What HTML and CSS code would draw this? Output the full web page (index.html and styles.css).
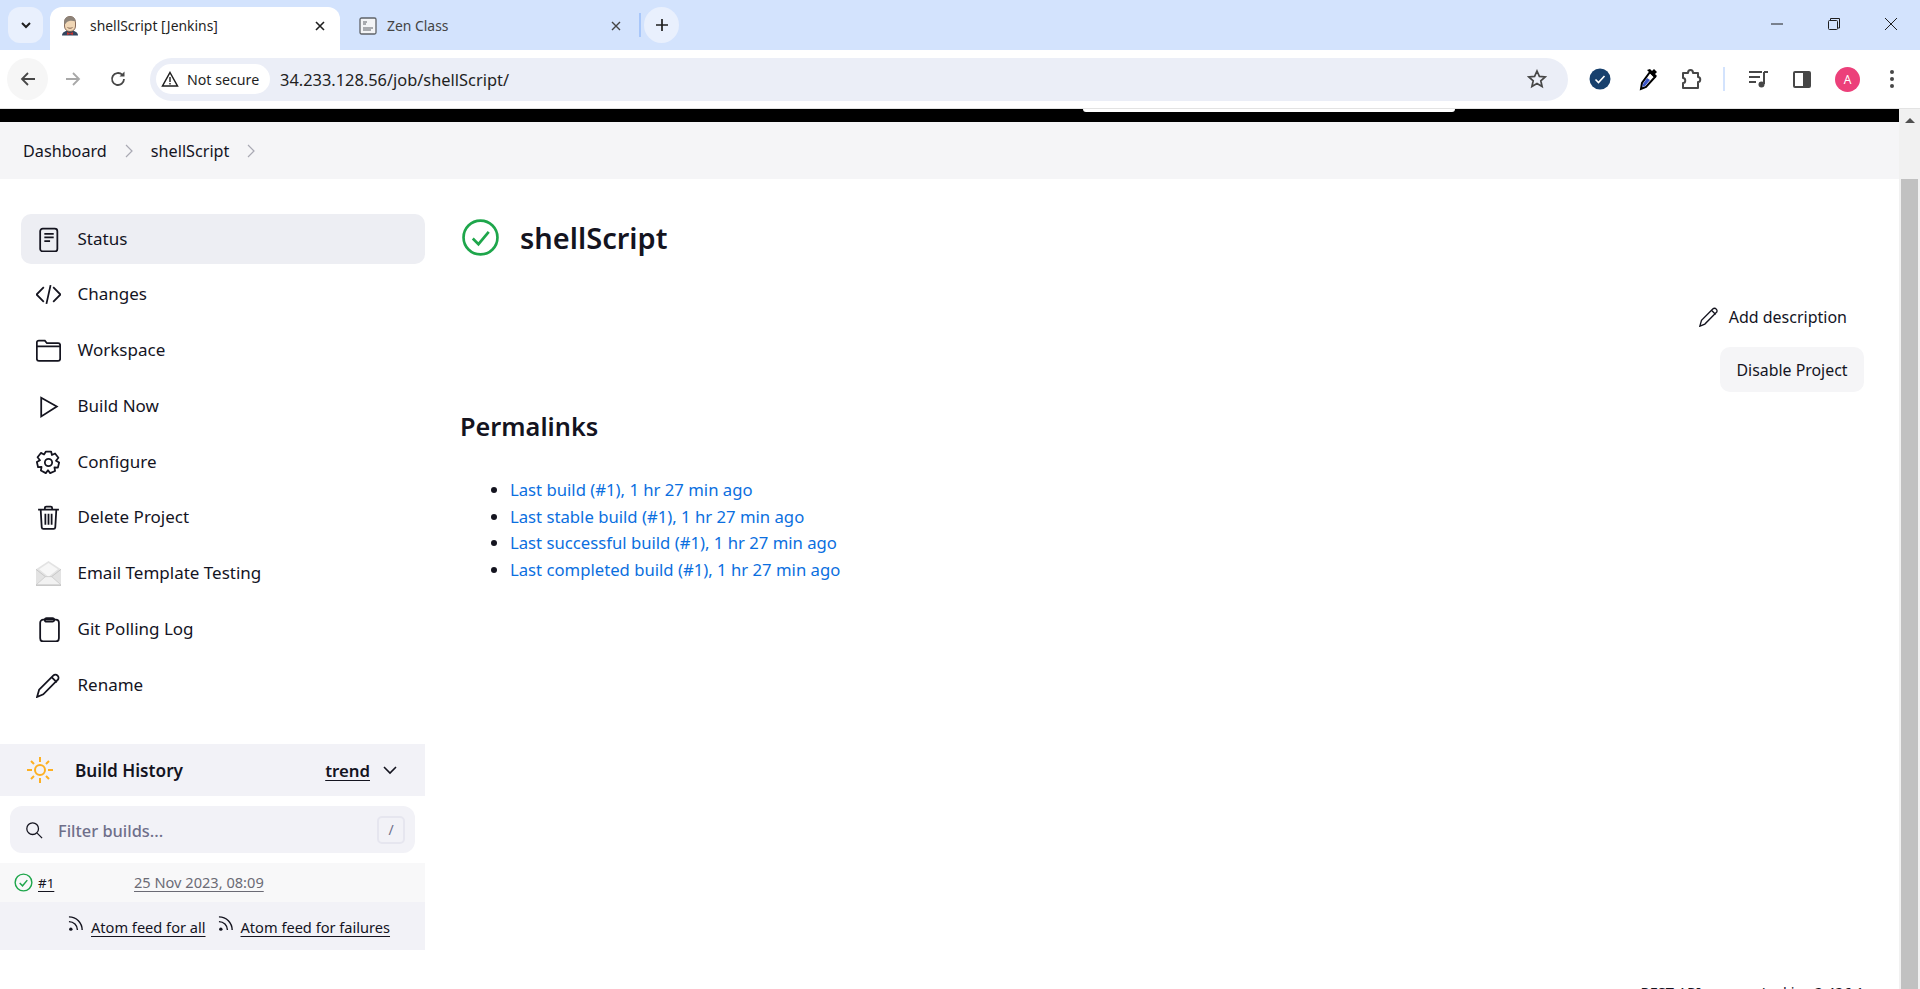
FILE: index.html
```html
<!DOCTYPE html>
<html lang="en">
<head>
  <meta charset="UTF-8">
  <title>shellScript [Jenkins]</title>
  <link rel="stylesheet" href="styles.css">
</head>
<body>
  <div class="tabstrip">
    <button class="tab-search"><svg width="14" height="14" viewBox="0 0 14 14"><path d="M3 5l4 4 4-4" fill="none" stroke="#1f1f1f" stroke-width="2"/></svg></button>
    <div class="tab tab-active">
      <svg class="favicon" viewBox="0 0 18 20">
        <path d="M1 19.500c0-3 3-5 8-5s8 2 8 5z" fill="#33455e"/>
        <path d="M3.500 7c0-4 2-6.500 5.500-6.500s5.500 2.500 5.500 6.500v3c0 3-2 5.500-5.500 5.500s-5.500-2.500-5.500-5.500z" fill="#f0d6b5" stroke="#6b4a3a" stroke-width=".8"/>
        <path d="M3.500 9C2 3 5 .5 9 .5c3.500 0 5.500 2 5.500 5-3-1.500-7.500-1-9 1z" fill="#8d8379"/>
        <path d="M6.500 11.500c1.500 1 3.500 1 5 0" fill="none" stroke="#6b4a3a" stroke-width=".8"/>
        <path d="M6 16l3 1.500 3-1.500v3l-3-1-3 1z" fill="#c8322c"/>
      </svg>
      <span class="tab-title">shellScript [Jenkins]</span>
      <svg class="tab-close" viewBox="0 0 12 12"><path d="M2 2l8 8M10 2l-8 8" stroke="#1f1f1f" stroke-width="1.6"/></svg>
    </div>
    <div class="tab">
      <svg class="favicon" viewBox="0 0 18 18">
        <rect x="1" y="1" width="16" height="16" rx="1.5" fill="#f3f4f6" stroke="#5f6368" stroke-width="1.3"/>
        <path d="M4 5h4M4 7h3M4 11h10M4 13h8" stroke="#5f6368" stroke-width="1"/>
      </svg>
      <span class="tab-title tab-title-dim">Zen Class</span>
      <svg class="tab-close" viewBox="0 0 12 12"><path d="M2 2l8 8M10 2l-8 8" stroke="#444" stroke-width="1.4"/></svg>
    </div>
    <span class="tab-sep"></span>
    <button class="new-tab"><svg width="16" height="16" viewBox="0 0 16 16"><path d="M8 2v12M2 8h12" stroke="#1f1f1f" stroke-width="1.7"/></svg></button>
    <div class="window-controls">
      <svg width="14" height="14" viewBox="0 0 14 14"><path d="M1 7h12" stroke="#1f1f1f" stroke-width="1"/></svg>
      <svg width="14" height="14" viewBox="0 0 14 14"><path d="M3.500 3V1.500h9V11H11" fill="none" stroke="#1f1f1f"/><rect x="1.500" y="3.500" width="9" height="9" rx="1" fill="none" stroke="#1f1f1f"/></svg>
      <svg width="14" height="14" viewBox="0 0 14 14"><path d="M1 1l12 12M13 1L1 13" stroke="#1f1f1f" stroke-width="1"/></svg>
    </div>
  </div>

  <div class="toolbar">
    <button class="nav-btn nav-back"><svg width="18" height="18" viewBox="0 0 18 18"><path d="M16 9H3M9 3L3 9l6 6" fill="none" stroke="#474747" stroke-width="1.8"/></svg></button>
    <button class="nav-btn"><svg width="18" height="18" viewBox="0 0 18 18"><path d="M2 9h13M9 3l6 6-6 6" fill="none" stroke="#a8a8a8" stroke-width="1.8"/></svg></button>
    <button class="nav-btn"><svg width="18" height="18" viewBox="0 0 18 18"><path d="M15 9a6 6 0 1 1-1.800-4.300" fill="none" stroke="#474747" stroke-width="1.8"/><path d="M15.500 1.500v5h-5z" fill="#474747"/></svg></button>
    <div class="omnibox">
      <div class="chip">
        <svg width="18" height="16" viewBox="0 0 18 16"><path d="M9 1.500L16.500 15h-15z" fill="none" stroke="#1f1f1f" stroke-width="1.5"/><path d="M9 6v5M9 12v1.500" stroke="#1f1f1f" stroke-width="1.4"/></svg>
        <span>Not secure</span>
      </div>
      <span class="url">34.233.128.56/job/shellScript/</span>
      <svg class="star" width="20" height="20" viewBox="0 0 20 20"><path d="M10 2l2.400 5.400 5.800.6-4.400 3.800 1.300 5.700-5.100-3-5.100 3 1.300-5.700L1.800 8l5.800-.6z" fill="none" stroke="#474747" stroke-width="1.7"/></svg>
    </div>
    <div class="toolbar-icons">
      <svg class="ext-check" width="22" height="22" viewBox="0 0 22 22"><circle cx="11" cy="11" r="10.500" fill="#17406d"/><path d="M6.500 11.500l3 3 6-6.500" fill="none" stroke="#fff" stroke-width="1.6"/></svg>
      <svg class="ext-dropper" width="22" height="24" viewBox="0 0 22 24"><path d="M13 5l5 5-9 10-5 2 1-6z" fill="#fff" stroke="#000" stroke-width="2"/><path d="M10 11l3 2-5 6-3 1 1-3z" fill="#3b55c8"/><path d="M13 2l2 2 2-2 3 3-2 2 2 2-2 2-8-8z" fill="#000"/></svg>
      <svg class="ext-puzzle" width="22" height="22" viewBox="0 0 22 22"><path d="M3 5h5c0-4 5-4 5 0h5v4c3 0 3 5 0 5v6H3v-5c3 0 3-5 0-5z" fill="none" stroke="#474747" stroke-width="2" stroke-linejoin="round"/></svg>
      <span class="toolbar-sep"></span>
      <svg class="tool-media" width="22" height="22" viewBox="0 0 22 22"><path d="M2 4h13M2 9h11M2 14h7" stroke="#474747" stroke-width="2"/><path d="M17 4h4M17 4v12" stroke="#474747" stroke-width="2"/><circle cx="14.500" cy="16.500" r="3" fill="#474747"/></svg>
      <svg class="tool-panel" width="22" height="22" viewBox="0 0 22 22"><rect x="2" y="3" width="18" height="17" rx="2" fill="#474747"/><rect x="4" y="5" width="8" height="13" fill="#fff"/></svg>
      <span class="avatar">A</span>
      <svg class="tool-menu" width="6" height="22" viewBox="0 0 6 22"><circle cx="3" cy="4" r="2" fill="#474747"/><circle cx="3" cy="11" r="2" fill="#474747"/><circle cx="3" cy="18" r="2" fill="#474747"/></svg>
    </div>
  </div>

  <div class="viewport">
    <div class="page">
      <header class="jenkins-header"><span class="header-search"></span></header>
      <nav class="breadcrumbs">
        <a>Dashboard</a>
        <svg class="crumb-sep" viewBox="0 0 10 16"><path d="M2 2l6 6-6 6" fill="none" stroke="#a9a9b3" stroke-width="1.2"/></svg>
        <a>shellScript</a>
        <svg class="crumb-sep" viewBox="0 0 10 16"><path d="M2 2l6 6-6 6" fill="none" stroke="#a9a9b3" stroke-width="1.2"/></svg>
      </nav>

      <div class="layout">
        <aside class="sidebar">
          <ul class="side-tasks">
            <li class="task task-active">
              <svg class="task-icon" viewBox="0 0 24 24"><rect x="4" y="1.500" width="16.500" height="22" rx="2.500"/><path d="M8 6.500h9M8 10h9M8 13.500h5.500"/></svg>
              Status
            </li>
            <li class="task">
              <svg class="task-icon" viewBox="0 0 24 24"><path d="M7.500 5L.5 12l7 7M16.500 5l7 7-7 7M14 3l-4 18"/></svg>
              Changes
            </li>
            <li class="task">
              <svg class="task-icon" viewBox="0 0 24 24"><path d="M.8 6V4.500c0-1.300.7-2 2-2h5.700l2 2.500h10.700c1.300 0 2 .7 2 2v13c0 1.300-.7 2-2 2H2.800c-1.300 0-2-.7-2-2zM.8 8h22.400"/></svg>
              Workspace
            </li>
            <li class="task">
              <svg class="task-icon" viewBox="0 0 24 24"><path d="M5 3.500l15 8.500-15 9.500z"/></svg>
              Build Now
            </li>
            <li class="task">
              <svg class="task-icon" viewBox="0 0 24 24"><circle cx="12" cy="12" r="3.500"/><path d="M9.500 1.500h5l.8 3.300 3-1.500 3.200 4.200-2.300 2.800 3 1.700-1.200 4.900-3.300-.2.600 3.400-4.700 2.100-2.100-2.800-2.100 2.800L4.700 19.700l.6-3.400-3.300.2L.8 11.500l3-1.700-2.300-2.800 3.200-4.200 3 1.500z" stroke-linejoin="round"/></svg>
              Configure
            </li>
            <li class="task">
              <svg class="task-icon" viewBox="0 0 24 24"><path d="M2 4.500h20M8.500 4.500V2.800c0-.8.500-1.300 1.300-1.300h4.400c.8 0 1.300.5 1.300 1.300v1.700M4.500 4.500l1 17c.1 1 .7 1.500 1.600 1.500h9.800c.9 0 1.500-.5 1.600-1.500l1-17M9 8.500v10.500M12 8.500v10.500M15 8.500v10.500"/></svg>
              Delete Project
            </li>
            <li class="task">
              <svg class="task-icon task-icon-mail" viewBox="0 0 24 24"><path d="M12 0L24 8v15H0V8z" fill="#e3e3e3"/><path d="M3 8l9-6 9 6-9 7z" fill="#f7f7f7"/><path d="M0 23l9-8h6l9 8z" fill="#f2f2f2" stroke="#c4c4c4" stroke-width=".6"/><path d="M0 8l9 7M24 8l-9 7" stroke="#bdbdbd" stroke-width=".7"/><path d="M0 23.500h24" stroke="#c9c9c9"/></svg>
              Email Template Testing
            </li>
            <li class="task">
              <svg class="task-icon" viewBox="0 0 24 24"><rect x="4" y="2.500" width="18" height="21" rx="3"/><rect x="8.500" y="1" width="9" height="3.500" rx="1.700"/></svg>
              Git Polling Log
            </li>
            <li class="task">
              <svg class="task-icon" viewBox="0 0 24 24"><path d="M1 23l2-7L16.500 2.500c1.300-1.300 3-1.300 4.200 0s1.300 3 0 4.200L7 20.500zM15 4l5 5"/></svg>
              Rename
            </li>
          </ul>

          <section class="build-history">
            <div class="history-head">
              <svg class="sun" viewBox="0 0 28 28"><circle cx="14" cy="14" r="5" fill="none" stroke="#fdb022" stroke-width="2"/><path d="M14 1v5M14 22v5M1 14h5M22 14h5M5 5l3 3M20 20l3 3M5 23l3-3M20 8l3-3" stroke="#fdb022" stroke-width="2"/></svg>
              <span class="history-title">Build History</span>
              <a class="trend">trend</a>
              <svg class="trend-caret" viewBox="0 0 16 16"><path d="M2 5l6 6 6-6" fill="none" stroke="#14141f" stroke-width="1.6"/></svg>
            </div>
            <div class="filter">
              <svg class="filter-icon" viewBox="0 0 20 20"><circle cx="8.500" cy="8.500" r="6.500" fill="none" stroke="#14141f" stroke-width="1.4"/><path d="M13.500 13.500l5.500 5.500" stroke="#14141f" stroke-width="1.4"/></svg>
              <span class="filter-text">Filter builds...</span>
              <kbd class="filter-key">/</kbd>
            </div>
            <div class="build-row">
              <svg class="build-status" viewBox="0 0 20 20"><circle cx="10" cy="10" r="8.800" fill="none" stroke="#1ea64b" stroke-width="1.5"/><path d="M6 10.500l3 3 5-6" fill="none" stroke="#1ea64b" stroke-width="1.5"/></svg>
              <a class="build-num">#1</a>
              <a class="build-date">25 Nov 2023, 08:09</a>
            </div>
            <div class="feeds">
              <svg class="rss" viewBox="0 0 18 18"><circle cx="3" cy="15" r="1.800" fill="#14141f"/><path d="M1 8c5 0 9 4 9 9M1 3c8 0 14 6 14 14" transform="translate(0 -1)" fill="none" stroke="#14141f" stroke-width="1.5"/></svg>
              <a class="feed-link">Atom feed for all</a>
              <svg class="rss rss-second" viewBox="0 0 18 18"><circle cx="3" cy="15" r="1.800" fill="#14141f"/><path d="M1 8c5 0 9 4 9 9M1 3c8 0 14 6 14 14" transform="translate(0 -1)" fill="none" stroke="#14141f" stroke-width="1.5"/></svg>
              <a class="feed-link">Atom feed for failures</a>
            </div>
          </section>
        </aside>

        <main class="main">
          <div class="job-title">
            <svg class="job-status" viewBox="0 0 36 36"><circle cx="18" cy="18" r="16.500" fill="none" stroke="#1ea64b" stroke-width="2.6"/><path d="M10.500 19l5.500 5.500 10-12" fill="none" stroke="#1ea64b" stroke-width="2.6"/></svg>
            <h1>shellScript</h1>
          </div>
          <div class="job-actions">
            <a class="add-desc">
              <svg viewBox="0 0 24 24"><path d="M1 23l2-7L16.500 2.500c1.300-1.300 3-1.300 4.200 0s1.300 3 0 4.200L7 20.500zM15 4l5 5" fill="none" stroke="#14141f" stroke-width="1.6"/></svg>
              Add description
            </a>
            <button class="disable-btn">Disable Project</button>
          </div>
          <h2>Permalinks</h2>
          <ul class="permalinks">
            <li><a>Last build (#1), 1 hr 27 min ago</a></li>
            <li><a>Last stable build (#1), 1 hr 27 min ago</a></li>
            <li><a>Last successful build (#1), 1 hr 27 min ago</a></li>
            <li><a>Last completed build (#1), 1 hr 27 min ago</a></li>
          </ul>
        </main>
      </div>

      <footer class="page-footer">
        <a>REST API</a>
        <a>Jenkins 2.426.1</a>
      </footer>
    </div>

    <div class="scrollbar">
      <div class="scroll-up"></div>
      <div class="scroll-thumb"></div>
    </div>
  </div>
</body>
</html>
```

FILE: styles.css
```css
* {
  box-sizing: border-box;
}

html, body {
  height: 100%;
}

body {
  margin: 0;
  display: flex;
  flex-direction: column;
  overflow: hidden;
  font-family: "Noto Sans", "Open Sans", sans-serif;
  color: #14141f;
  background: #fff;
}

button {
  border: none;
  padding: 0;
  font: inherit;
  display: flex;
  align-items: center;
  justify-content: center;
}

ul {
  margin: 0;
}

/* browser chrome */
.tabstrip {
  height: 50px;
  flex: none;
  display: flex;
  align-items: flex-end;
  padding-left: 8px;
  background: #d3e3fd;
}

.tab-search {
  width: 35px;
  height: 36px;
  margin: 0 7px 7px 0;
  border-radius: 12px;
  background: #e9f0fd;
}

.tab {
  width: 290px;
  height: 43px;
  padding: 0 14px 6px 11px;
  display: flex;
  align-items: center;
  border-radius: 12px 12px 0 0;
}

.tab-active {
  background: #fff;
}

.tab + .tab {
  width: 298px;
  padding-left: 19px;
  padding-right: 16px;
}

.favicon {
  width: 18px;
  height: 20px;
  flex: none;
}

.tab-title {
  flex: 1;
  margin-left: 11px;
  font-size: 13.9px;
  color: #1f1f1f;
}

.tab-title-dim {
  margin-left: 10px;
  color: #444;
}

.tab-close {
  width: 12px;
  height: 12px;
  flex: none;
}

.tab-sep {
  width: 2px;
  height: 24px;
  margin: 0 3px 13px 1px;
  background: #a8c7fa;
}

.new-tab {
  width: 35px;
  height: 36px;
  margin-bottom: 7px;
  border-radius: 50%;
  background: #e9f0fd;
}

.window-controls {
  margin-left: auto;
  width: 150px;
  height: 50px;
  padding: 0 22px 2px 0;
  display: flex;
  align-items: center;
  justify-content: space-between;
}

.toolbar {
  height: 58px;
  flex: none;
  display: flex;
  align-items: center;
  padding-left: 7px;
  background: #fff;
  border-radius: 10px 10px 0 0;
}

.nav-btn {
  width: 41px;
  height: 42px;
  margin-right: 4px;
  border-radius: 50%;
  background: transparent;
}

.nav-back {
  background: #f6f6f6;
}

.omnibox {
  width: 1418px;
  height: 43px;
  margin-left: 8px;
  padding: 0 21px 0 6px;
  display: flex;
  align-items: center;
  border-radius: 22px;
  background: #ebeef7;
}

.chip {
  width: 114px;
  height: 30px;
  padding-left: 5px;
  display: flex;
  align-items: center;
  gap: 8px;
  border-radius: 15px;
  background: #fff;
  font-size: 14.2px;
  color: #1f1f1f;
}

.url {
  flex: 1;
  margin-left: 10px;
  font-size: 16.4px;
  color: #1f1f1f;
}

.toolbar-icons {
  flex: 1;
  padding-left: 21px;
  display: flex;
  align-items: center;
}

.ext-dropper {
  margin-left: 26px;
}

.ext-puzzle,
.toolbar-sep {
  margin-left: 21px;
}

.tool-media,
.tool-panel,
.avatar {
  margin-left: 22px;
}

.tool-menu {
  margin-left: 29px;
}

.toolbar-sep {
  width: 2px;
  height: 24px;
  background: #d3e3fd;
}

.avatar {
  width: 25px;
  height: 25px;
  display: flex;
  align-items: center;
  justify-content: center;
  border-radius: 50%;
  background: #ec407a;
  color: #fff;
  font-size: 12px;
}

/* page */
.viewport {
  flex: 1;
  min-height: 0;
  display: flex;
  border-top: 1px solid #e3e3e3;
}

.page {
  flex: 1;
  min-width: 0;
  display: flex;
  flex-direction: column;
}

.jenkins-header {
  height: 13px;
  flex: none;
  background: #000;
  padding-left: 1083px;
}

.header-search {
  display: block;
  width: 372px;
  height: 3px;
  background: #fff;
  border-radius: 0 0 6px 6px;
}

.breadcrumbs {
  height: 57px;
  flex: none;
  padding-left: 23px;
  display: flex;
  align-items: center;
  background: #f5f5f7;
  font-size: 16.2px;
  color: #14141f;
}

.crumb-sep {
  width: 10px;
  height: 16px;
  margin: 0 17px;
}

.layout {
  height: 803px;
  flex: none;
  display: flex;
}

.sidebar {
  width: 425px;
  flex: none;
  padding-top: 35px;
}

.side-tasks {
  list-style: none;
  padding: 0 0 0 21px;
  display: flex;
  flex-direction: column;
  gap: 5.8px;
}

.task {
  height: 50px;
  padding: 0 0 2px 15px;
  display: flex;
  align-items: center;
  gap: 16.5px;
  border-radius: 10px;
  font-size: 17px;
  color: #14141f;
}

.task-active {
  background: #edeef3;
}

.task-icon {
  width: 25px;
  height: 25px;
  margin-top: 2px;
  flex: none;
  fill: none;
  stroke: #14141f;
  stroke-width: 1.7;
}

.task-icon-mail {
  stroke: none;
}

.build-history {
  margin-top: 34px;
}

.history-head {
  height: 52px;
  display: flex;
  align-items: center;
  padding-left: 26px;
  background: #f2f2f7;
  font-size: 17.2px;
  font-weight: 600;
}

.sun {
  width: 28px;
  height: 28px;
  flex: none;
}

.history-title {
  margin-left: 21px;
}

.trend {
  margin-left: auto;
  font-size: 16.8px;
  text-decoration: underline;
  text-underline-offset: 3px;
}

.trend-caret {
  width: 16px;
  height: 16px;
  margin: 0 27px 0 12px;
}

.filter {
  height: 47px;
  margin: 10px;
  padding: 0 10px 0 15px;
  display: flex;
  align-items: center;
  border-radius: 12px;
  background: #f2f2f7;
}

.filter-icon {
  width: 18px;
  height: 18px;
  flex: none;
}

.filter-text {
  flex: 1;
  margin-left: 15px;
  padding-top: 2px;
  font-size: 16.4px;
  font-weight: 500;
  color: #6f6f8a;
}

.filter-key {
  width: 28px;
  height: 28px;
  display: flex;
  align-items: center;
  justify-content: center;
  border: 2px solid #e6e6ef;
  border-radius: 5px;
  font-family: inherit;
  font-size: 14px;
  color: #6f6f8a;
}

.build-row {
  height: 39px;
  padding-left: 14px;
  display: flex;
  align-items: center;
  background: #f8f8f9;
  font-size: 14.6px;
}

.build-status {
  width: 19px;
  height: 19px;
  flex: none;
}

.build-num {
  margin-left: 5px;
  width: 96px;
  font-size: 13.4px;
  text-decoration: underline;
  text-underline-offset: 3px;
}

.build-date {
  padding-bottom: 2px;
  color: #6b6b75;
  text-decoration: underline;
  text-underline-offset: 3px;
}

.feeds {
  height: 48px;
  padding: 2px 0 0 68px;
  display: flex;
  align-items: center;
  background: #f2f2f7;
  font-size: 14.6px;
}

.rss {
  width: 17px;
  height: 17px;
  flex: none;
  margin: -8px 6px 0 0;
}

.rss-second {
  margin-left: 12px;
}

.feed-link {
  text-decoration: underline;
  text-underline-offset: 3px;
}

.main {
  flex: 1;
  min-width: 0;
  padding: 0 35px;
}

.job-title {
  height: 36px;
  margin-top: 40px;
  display: flex;
  align-items: center;
  gap: 21px;
  padding-left: 2px;
}

.job-status {
  width: 37px;
  height: 37px;
  flex: none;
}

h1 {
  margin: 0;
  font-size: 29px;
  font-weight: 600;
}

.job-actions {
  margin-top: 50px;
  display: flex;
  flex-direction: column;
  align-items: flex-end;
  gap: 18px;
}

.add-desc {
  margin-right: 17px;
  height: 24px;
  display: flex;
  align-items: center;
  gap: 10px;
  font-size: 16px;
}

.add-desc svg {
  width: 20px;
  height: 20px;
}

.disable-btn {
  width: 144px;
  height: 45px;
  border-radius: 10px;
  background: #f5f5f7;
  font-size: 15.9px;
  color: #14141f;
}

h2 {
  margin: 18px 0 0;
  font-size: 25.3px;
  font-weight: 600;
  line-height: 32px;
}

.permalinks {
  margin-top: 35px;
  padding-left: 50px;
  font-size: 16.7px;
  line-height: 26.6px;
}

.permalinks a {
  color: #0b6fe0;
}

.page-footer {
  display: flex;
  justify-content: flex-end;
  gap: 61px;
  padding-right: 35px;
  font-size: 14.6px;
}

.scrollbar {
  width: 21px;
  flex: none;
  padding: 0 2px;
  display: flex;
  flex-direction: column;
  background: #f1f1f1;
}

.scroll-up {
  width: 0;
  height: 0;
  margin: 9px auto 0;
  border: 5px solid transparent;
  border-top: none;
  border-bottom: 5px solid #505050;
}

.scroll-thumb {
  flex: 1;
  margin-top: 56px;
  background: #c1c1c1;
}
```
